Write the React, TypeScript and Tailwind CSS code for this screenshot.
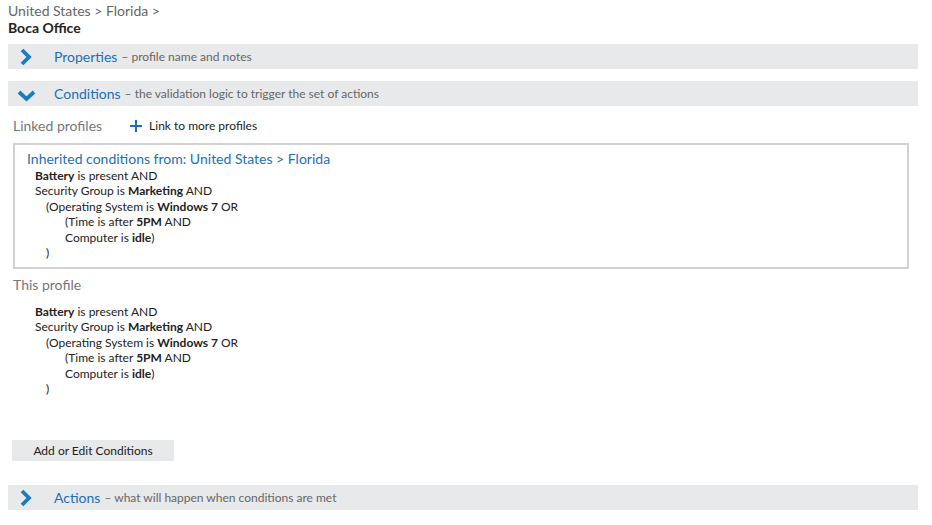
import React from "react";

type Line = { indent: number; parts: [string, boolean][] };

const conditions: Line[] = [
  { indent: 0, parts: [["Battery", true], [" is present AND", false]] },
  { indent: 0, parts: [["Security Group is ", false], ["Marketing", true], [" AND", false]] },
  { indent: 1, parts: [["(Operating System is ", false], ["Windows 7", true], [" OR", false]] },
  { indent: 2, parts: [["(Time is after ", false], ["5PM", true], [" AND", false]] },
  { indent: 2, parts: [["Computer is ", false], ["idle", true], [")", false]] },
  { indent: 1, parts: [[")", false]] },
];

const indentClass = ["pl-0", "pl-[11px]", "pl-[30px]"];

function ConditionList() {
  return (
    <div className="text-[12px] leading-[15.4px] text-[#222]">
      {conditions.map((line, i) => (
        <div key={i} className={indentClass[line.indent]}>
          {line.parts.map(([t, b], j) =>
            b ? (
              <b key={j} className="font-bold">
                {t}
              </b>
            ) : (
              <span key={j}>{t}</span>
            )
          )}
        </div>
      ))}
    </div>
  );
}

function Chevron({ open }: { open?: boolean }) {
  return (
    <svg width="20" height="20" viewBox="0 0 20 20" className="shrink-0">
      {open ? (
        <polyline points="2,8 9.5,15 17,8" fill="none" stroke="#1a7cc1" strokeWidth="3.8" />
      ) : (
        <polyline points="5,3 12,10 5,17" fill="none" stroke="#1a7cc1" strokeWidth="3.8" />
      )}
    </svg>
  );
}

function SectionBar({ title, desc, open }: { title: string; desc: string; open?: boolean }) {
  return (
    <div className="flex h-[25px] w-[910px] items-center bg-[#e8e9ea] pl-[9px]">
      <Chevron open={open} />
      <span className="ml-[17px] text-[14px] text-[#1c6fb8]">{title}</span>
      <span className="ml-[4px] text-[12px] text-[#666]">– {desc}</span>
    </div>
  );
}

export default function App() {
  return (
    <div
      className="min-h-[525px] w-[932px] bg-white pl-[8px] pt-[2px]"
      style={{ fontFamily: "Lato, 'Open Sans', sans-serif" }}
    >
      <div className="text-[14px] leading-[17px] text-[#666]">United States &gt; Florida &gt;</div>
      <div className="text-[14px] font-bold leading-[18px] text-[#222]">Boca Office</div>

      <div className="mt-[7px]">
        <SectionBar title="Properties" desc="profile name and notes" />
      </div>
      <div className="mt-[12px]">
        <SectionBar title="Conditions" desc="the validation logic to trigger the set of actions" open />
      </div>

      <div className="ml-[5px] mt-[9px] flex items-center">
        <span className="text-[14px] text-[#777]">Linked profiles</span>
        <span className="ml-[28px] flex items-center text-[12px] text-[#222]">
          <svg width="12" height="12" viewBox="0 0 12 12" className="mr-[7px]">
            <path d="M6 0v12M0 6h12" stroke="#1a6fb5" strokeWidth="2" />
          </svg>
          Link to more profiles
        </span>
      </div>

      <div className="ml-[5px] mt-[7px] h-[126px] w-[896px] border-2 border-[#d2d2d2] pl-[12px] pt-[5px]">
        <div className="text-[14px] leading-[17px] text-[#1c6fb8]">
          Inherited conditions from: United States &gt; Florida
        </div>
        <div className="pl-[8px] pt-[1px]">
          <ConditionList />
        </div>
      </div>

      <div className="ml-[5px] mt-[5px] text-[14px] text-[#777]">This profile</div>
      <div className="ml-[27px] mt-[9px]">
        <ConditionList />
      </div>

      <div className="ml-[4px] mt-[44px] flex h-[21px] w-[162px] items-center justify-center bg-[#e8e9ea] text-[12px] text-[#222]">
        Add or Edit Conditions
      </div>

      <div className="mt-[24px]">
        <SectionBar title="Actions" desc="what will happen when conditions are met" />
      </div>
    </div>
  );
}
